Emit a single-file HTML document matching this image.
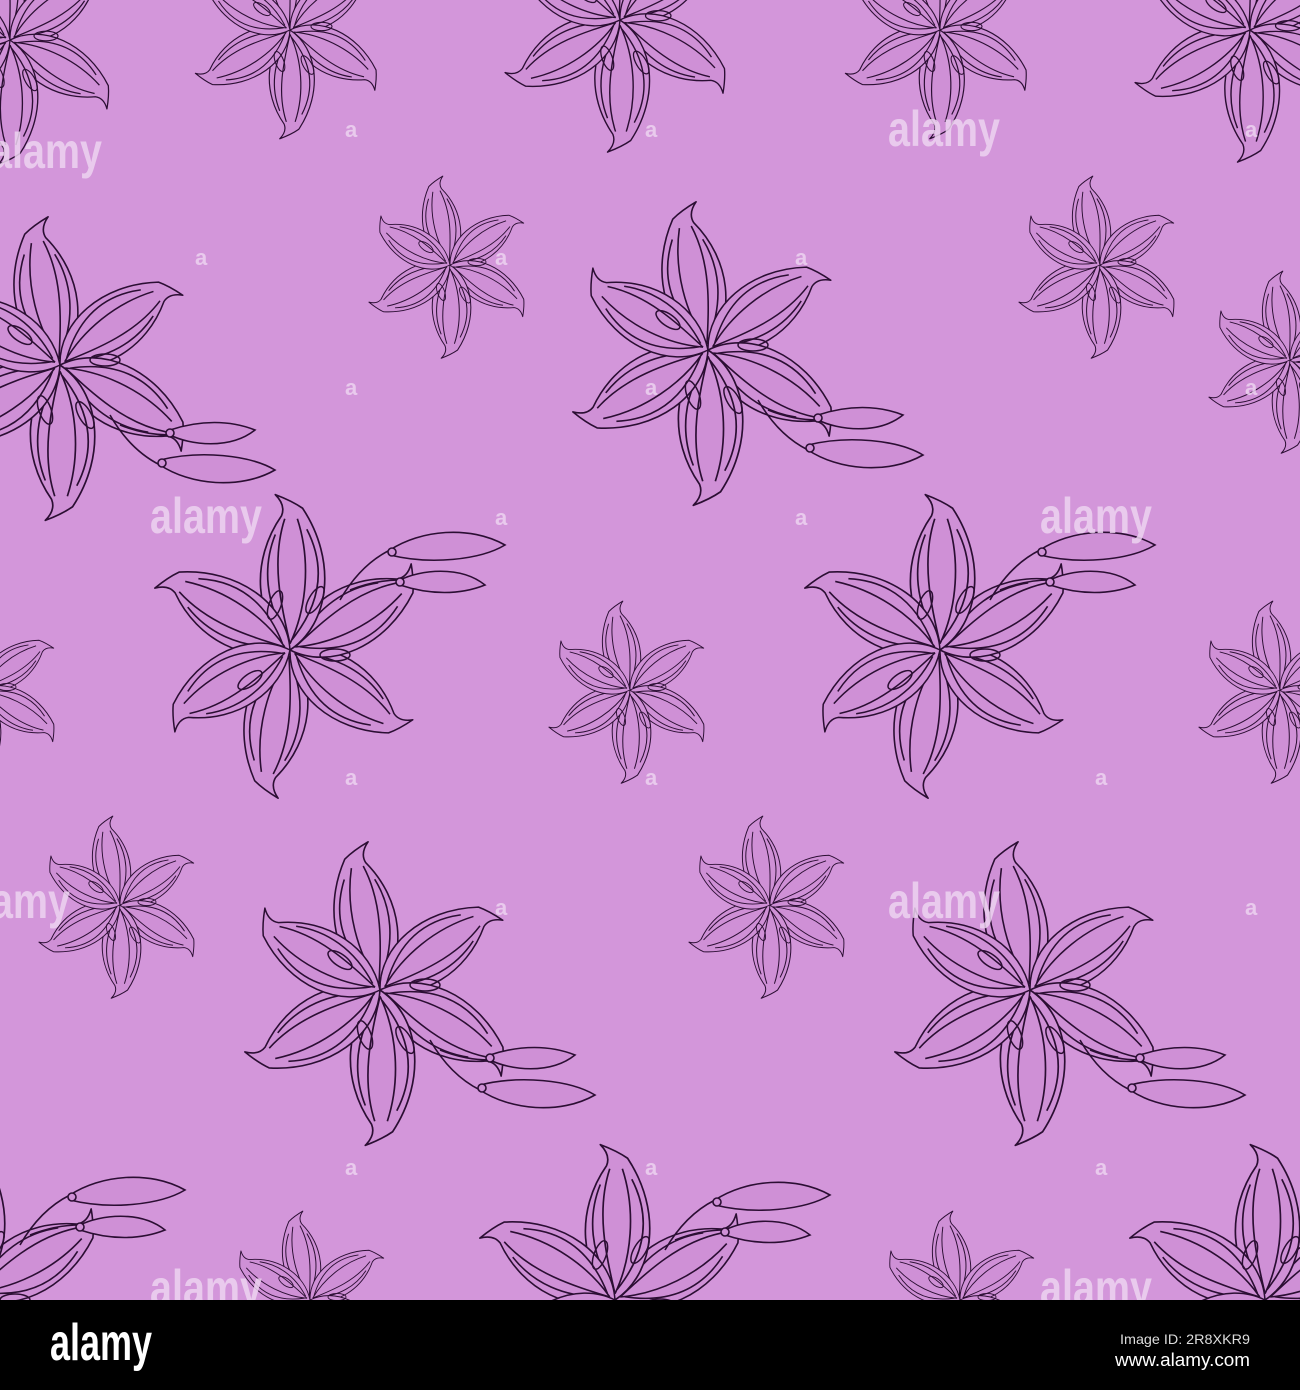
<!DOCTYPE html>
<html><head><meta charset="utf-8"><style>
html,body{margin:0;padding:0}
body{width:1300px;height:1390px;background:#000;overflow:hidden;font-family:"Liberation Sans",sans-serif}
svg{display:block}
</style></head><body>
<svg width="1300" height="1390" xmlns="http://www.w3.org/2000/svg">
<defs>
<g id="petal" fill="none" stroke="#2b0e33" stroke-width="1.6" stroke-linejoin="round">
<path d="M0,0 C-38,-25 -45,-85 -12,-135 Q-2,-142 14,-148 Q4,-138 8,-128 C38,-85 34,-30 0,0 Z" fill="#cf90d6"/>
<path d="M0,-6 C-16,-40 -20,-85 -7,-125"/>
<path d="M0,-6 C9,-45 18,-85 5,-125"/>
<path d="M-2,-10 C-30,-45 -34,-80 -16,-115"/>
<path d="M2,-10 C24,-45 26,-80 14,-110"/>
</g>
<g id="flower">
<use href="#petal" transform="rotate(-10)"/>
<use href="#petal" transform="rotate(55) scale(0.95)"/>
<use href="#petal" transform="rotate(120)"/>
<use href="#petal" transform="rotate(180) scale(1.05)"/>
<use href="#petal" transform="rotate(240)"/>
<use href="#petal" transform="rotate(300) scale(0.95)"/>
<g fill="none" stroke="#2b0e33" stroke-width="1.5">
<ellipse cx="-40" cy="-30" rx="14" ry="6" transform="rotate(35 -40 -30)"/>
<ellipse cx="45" cy="-5" rx="15" ry="6"/>
<ellipse cx="-15" cy="45" rx="15" ry="6" transform="rotate(70 -15 45)"/>
<ellipse cx="25" cy="50" rx="15" ry="6" transform="rotate(60 25 50)"/>
</g>
</g>
<g id="bigflower">
<use href="#flower"/>
<g fill="#cf90d6" stroke="#2b0e33" stroke-width="1.6">
<path d="M50,50 Q70,85 100,100" fill="none"/>
<path d="M60,60 Q85,70 110,70" fill="none"/>
<path d="M100,95 C140,85 190,90 215,105 C180,125 130,120 100,100 Z"/>
<path d="M110,65 C140,55 170,55 195,65 C170,85 130,80 110,70 Z"/>
<circle cx="102" cy="98" r="4"/><circle cx="110" cy="68" r="4"/>
</g>
</g>
<g id="wm">
<text x="0" y="0" font-family="Liberation Sans, sans-serif" font-weight="bold" font-size="50" textLength="112" lengthAdjust="spacingAndGlyphs">alamy</text>
</g>
</defs>
<rect width="1300" height="1300" fill="#d396da"/>
<g>
<use href="#bigflower" transform="translate(708,350)"/>
<use href="#bigflower" transform="translate(60,365)"/>
<use href="#bigflower" transform="translate(380,990)"/>
<use href="#bigflower" transform="translate(1030,990)"/>
<use href="#bigflower" transform="translate(290,650) scale(1,-1)"/>
<use href="#bigflower" transform="translate(940,650) scale(1,-1)"/>
<use href="#bigflower" transform="translate(-30,1295) scale(1,-1)"/>
<use href="#bigflower" transform="translate(615,1300) scale(1,-1)"/>
<use href="#bigflower" transform="translate(1265,1300) scale(1,-1)"/>
<use href="#flower" transform="translate(620,20) scale(0.85)"/>
<use href="#flower" transform="translate(1250,30) scale(0.85)"/>
<use href="#flower" transform="translate(290,30) scale(0.7)"/>
<use href="#flower" transform="translate(940,30) scale(0.7)"/>
<use href="#flower" transform="translate(10,40) scale(0.8)"/>
<use href="#flower" transform="translate(450,265) scale(0.6)"/>
<use href="#flower" transform="translate(1100,265) scale(0.6)"/>
<use href="#flower" transform="translate(630,690) scale(0.6)"/>
<use href="#flower" transform="translate(1280,690) scale(0.6)"/>
<use href="#flower" transform="translate(-20,690) scale(0.6)"/>
<use href="#flower" transform="translate(120,905) scale(0.6)"/>
<use href="#flower" transform="translate(770,905) scale(0.6)"/>
<use href="#flower" transform="translate(1290,360) scale(0.6)"/>
<use href="#flower" transform="translate(310,1300) scale(0.6)"/>
<use href="#flower" transform="translate(960,1300) scale(0.6)"/>
</g>
<g fill="#ecd3f0" fill-opacity="0.85">
<use href="#wm" transform="translate(-10,168)"/>
<use href="#wm" transform="translate(888,146)"/>
<use href="#wm" transform="translate(150,533)"/>
<use href="#wm" transform="translate(1040,533)"/>
<use href="#wm" transform="translate(-42,918)"/>
<use href="#wm" transform="translate(888,918)"/>
<use href="#wm" transform="translate(150,1305)"/>
<use href="#wm" transform="translate(1040,1305)"/>
</g>
<g fill="#ecd3f0" fill-opacity="0.85" font-family="Liberation Sans, sans-serif" font-weight="bold" font-size="22">
<text x="345" y="137">a</text><text x="645" y="137">a</text><text x="1245" y="137">a</text>
<text x="195" y="265">a</text><text x="495" y="265">a</text><text x="795" y="265">a</text>
<text x="345" y="395">a</text><text x="645" y="395">a</text><text x="1245" y="395">a</text>
<text x="495" y="525">a</text><text x="795" y="525">a</text>
<text x="345" y="785">a</text><text x="645" y="785">a</text><text x="1095" y="785">a</text>
<text x="495" y="915">a</text><text x="1245" y="915">a</text>
<text x="345" y="1175">a</text><text x="645" y="1175">a</text><text x="1095" y="1175">a</text>
</g>
<rect y="1300" width="1300" height="90" fill="#000"/>
<text x="50" y="1360" fill="#fff" font-family="Liberation Sans, sans-serif" font-weight="bold" font-size="52" textLength="102" lengthAdjust="spacingAndGlyphs">alamy</text>
<text x="1250" y="1344" fill="#ddd" text-anchor="end" font-family="Liberation Sans, sans-serif" font-size="14" textLength="130" lengthAdjust="spacingAndGlyphs">Image ID: 2R8XKR9</text>
<text x="1250" y="1366" fill="#fff" text-anchor="end" font-family="Liberation Sans, sans-serif" font-size="18" textLength="135" lengthAdjust="spacingAndGlyphs">www.alamy.com</text>
</svg>
</body></html>
